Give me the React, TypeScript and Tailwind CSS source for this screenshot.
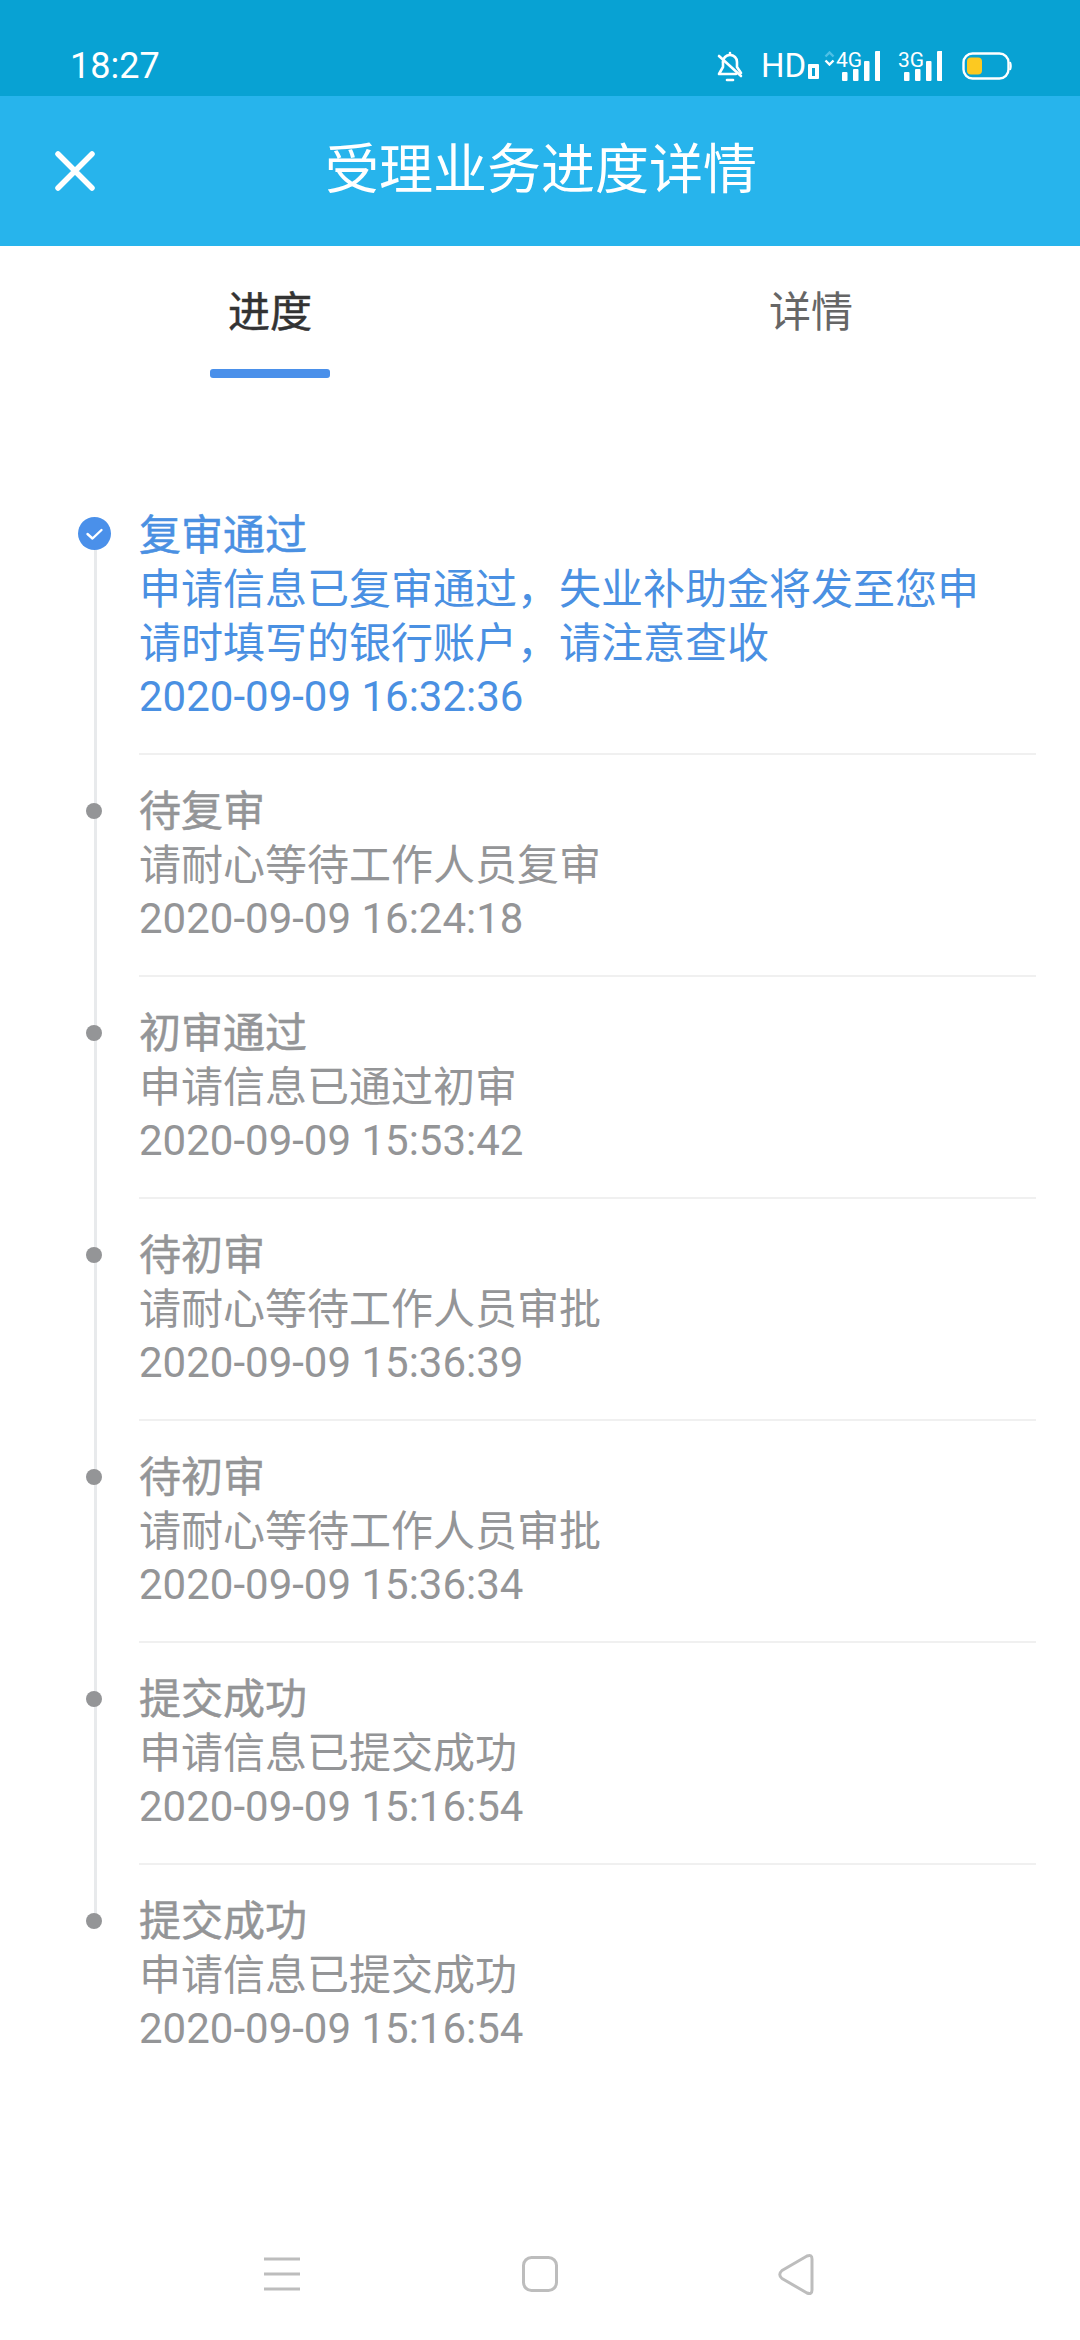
const FONT = "font-['Roboto','Noto_Sans_CJK_SC',sans-serif]";

type Item = { title: string; lines: string[]; time: string };

const items: Item[] = [
  {
    title: "复审通过",
    lines: ["申请信息已复审通过，失业补助金将发至您申", "请时填写的银行账户，请注意查收"],
    time: "2020-09-09 16:32:36",
  },
  { title: "待复审", lines: ["请耐心等待工作人员复审"], time: "2020-09-09 16:24:18" },
  { title: "初审通过", lines: ["申请信息已通过初审"], time: "2020-09-09 15:53:42" },
  { title: "待初审", lines: ["请耐心等待工作人员审批"], time: "2020-09-09 15:36:39" },
  { title: "待初审", lines: ["请耐心等待工作人员审批"], time: "2020-09-09 15:36:34" },
  { title: "提交成功", lines: ["申请信息已提交成功"], time: "2020-09-09 15:16:54" },
  { title: "提交成功", lines: ["申请信息已提交成功"], time: "2020-09-09 15:16:54" },
];

function Bars({ className }: { className: string }) {
  return (
    <svg width="38" height="30" viewBox="0 0 38 30" className={className}>
      <rect x="0" y="21" width="5.500" height="9" rx="1" fill="#fff" />
      <rect x="11" y="18" width="5.500" height="12" rx="1" fill="#fff" />
      <rect x="22" y="10" width="5.500" height="20" rx="1" fill="#fff" />
      <rect x="33" y="0" width="5.500" height="30" rx="1" fill="#fff" />
    </svg>
  );
}

function StatusBar() {
  return (
    <div className="h-[96px] bg-[#08a2d3] flex items-start pt-[46px] pl-[70px] pr-[68px] justify-between text-white">
      <span className="text-[36px] leading-[40px]">18:27</span>
      <div className="flex items-center mt-[5px] h-[30px]">
        <svg width="26" height="31" viewBox="0 0 26 31" fill="none" stroke="#fff" strokeWidth="2.600" strokeLinecap="round" strokeLinejoin="round">
          <path d="M13 2v2M6 11c0-4 3-7 7-7s7 3 7 7v5l4 6" />
          <path d="M6 11v5l-4 7h17" />
          <path d="M10 29h6" />
          <path d="M2 5l22 20" />
        </svg>
        <div className="flex items-end w-[48px] h-[26px] ml-[18px]">
          <span className="text-[33px] leading-[26px] font-['Roboto',sans-serif]">HD</span>
          <span className="w-[11px] h-[15px] bg-white ml-[2px] rounded-[1px] flex items-center justify-center shrink-0">
            <span className="w-[3px] h-[8px] bg-[#08a2d3]" />
          </span>
        </div>
        <div className="relative w-[56px] h-[30px] ml-[15px]">
          <svg width="11" height="15" viewBox="0 0 11 15" className="absolute left-0 top-0" fill="none" strokeWidth="2.400">
            <path d="M1.500 5.500l4-4 4 4" stroke="#4fc0e6" />
            <path d="M1.500 9.500l4 4 4-4" stroke="#fff" />
          </svg>
          <span className="absolute left-[12px] top-[-3px] text-[21px] leading-[24px]">4G</span>
          <Bars className="absolute left-[18px] top-0" />
        </div>
        <div className="relative w-[44px] h-[30px] ml-[18px]">
          <span className="absolute left-0 top-[-3px] text-[21px] leading-[24px]">3G</span>
          <Bars className="absolute left-[6px] top-0" />
        </div>
        <svg width="50" height="28" viewBox="0 0 50 28" className="ml-[20px]">
          <rect x="1.500" y="1.500" width="45" height="25" rx="9" fill="none" stroke="#fff" strokeWidth="2.400" />
          <path d="M48 10q1.600 4 0 8" fill="none" stroke="#fff" strokeWidth="2" />
          <rect x="5" y="5.500" width="15" height="17" rx="4" fill="#fcc921" />
        </svg>
      </div>
    </div>
  );
}

function Header() {
  return (
    <div className="h-[150px] bg-[#27b4ec] flex items-center relative text-white">
      <svg width="40" height="40" viewBox="0 0 40 40" className="ml-[55px]" fill="none" stroke="#fff" strokeWidth="5.500" strokeLinecap="round">
        <path d="M3 3l34 34M37 3L3 37" />
      </svg>
      <div className="absolute inset-0 flex items-center justify-center pl-[2px]">
        <span className="text-[54px] leading-[60px] font-normal">受理业务进度详情</span>
      </div>
    </div>
  );
}

function Tabs() {
  return (
    <div className="flex h-[132px]">
      <div className="w-[540px] relative flex flex-col items-center">
        <span className="text-[42px] leading-[54px] mt-[40px] text-[#333333] [-webkit-text-stroke:0.5px_#333333]">进度</span>
        <span className="absolute left-[210px] top-[123px] w-[120px] h-[9px] rounded-[3px] bg-[#4a90ea]" />
      </div>
      <div className="w-[540px] flex flex-col items-center pl-[2px]">
        <span className="text-[42px] leading-[54px] mt-[40px] text-[#666666]">详情</span>
      </div>
    </div>
  );
}

function Row({ item, first, last }: { item: Item; first: boolean; last: boolean }) {
  const color = first ? "text-[#4a90e2]" : "text-[#949597]";
  const shift = first ? "translate-y-[3px]" : "translate-y-[1px]";
  const dateShift = first ? "translate-y-[2px]" : "translate-y-0";
  const stroke = first ? "[-webkit-text-stroke:0.5px_#4a90e2]" : "[-webkit-text-stroke:0.5px_#949597]";
  return (
    <div className="flex">
      <div className="w-[139px] relative shrink-0">
        {first ? (
          <svg width="33" height="33" viewBox="0 0 33 33" className="absolute left-[78px] top-[11px]">
            <circle cx="16.500" cy="16.500" r="16.500" fill="#4a90ea" />
            <path d="M9.500 17l5 4.500 9-8.500" fill="none" stroke="#fff" strokeWidth="2.400" strokeLinecap="round" strokeLinejoin="round" />
          </svg>
        ) : (
          <span className="absolute left-[86px] top-[19px] w-[16px] h-[16px] rounded-full bg-[#949597]" />
        )}
      </div>
      <div className={`flex-1 mr-[44px] ${last ? "" : "border-b-2 border-[#f0f0f0]"} ${first ? "pb-[31px]" : "pb-[29px]"}`}>
        <div className={`text-[42px] leading-[54px] ${shift} ${stroke} ${color}`}>{item.title}</div>
        {item.lines.map((l) => (
          <div key={l} className={`text-[42px] leading-[54px] ${shift} ${color}`}>{l}</div>
        ))}
        <div className={`text-[42px] leading-[54px] ${dateShift} ${color}`}>{item.time}</div>
      </div>
    </div>
  );
}

function Timeline() {
  return (
    <div className="relative pt-[128px] flex flex-col gap-[29px]">
      <span className="absolute left-[94px] top-[150px] w-[3px] h-[1393px] bg-[#e8eaec]" />
      {items.map((it, i) => (
        <div key={i} className="relative">
          <Row item={it} first={i === 0} last={i === items.length - 1} />
        </div>
      ))}
    </div>
  );
}

function NavBar() {
  return (
    <div className="absolute left-[230px] top-[2230px]">
      <svg width="620" height="80" viewBox="0 0 620 80" className="block" fill="none" stroke="#bdbdbd" strokeWidth="3">
        <path d="M34 29h36M34 44h36M34 59h36" />
        <rect x="293.500" y="27.500" width="33" height="33" rx="8" />
        <path d="M552 40.500l25-14.500q5-2 5 3v31q0 5-5 3l-25-14.500q-4.500-4 0-8z" strokeLinejoin="round" />
      </svg>
    </div>
  );
}

export default function App() {
  return (
    <div className={`relative w-[1080px] h-[2340px] bg-white overflow-hidden ${FONT}`}>
      <StatusBar />
      <Header />
      <Tabs />
      <Timeline />
      <NavBar />
    </div>
  );
}
